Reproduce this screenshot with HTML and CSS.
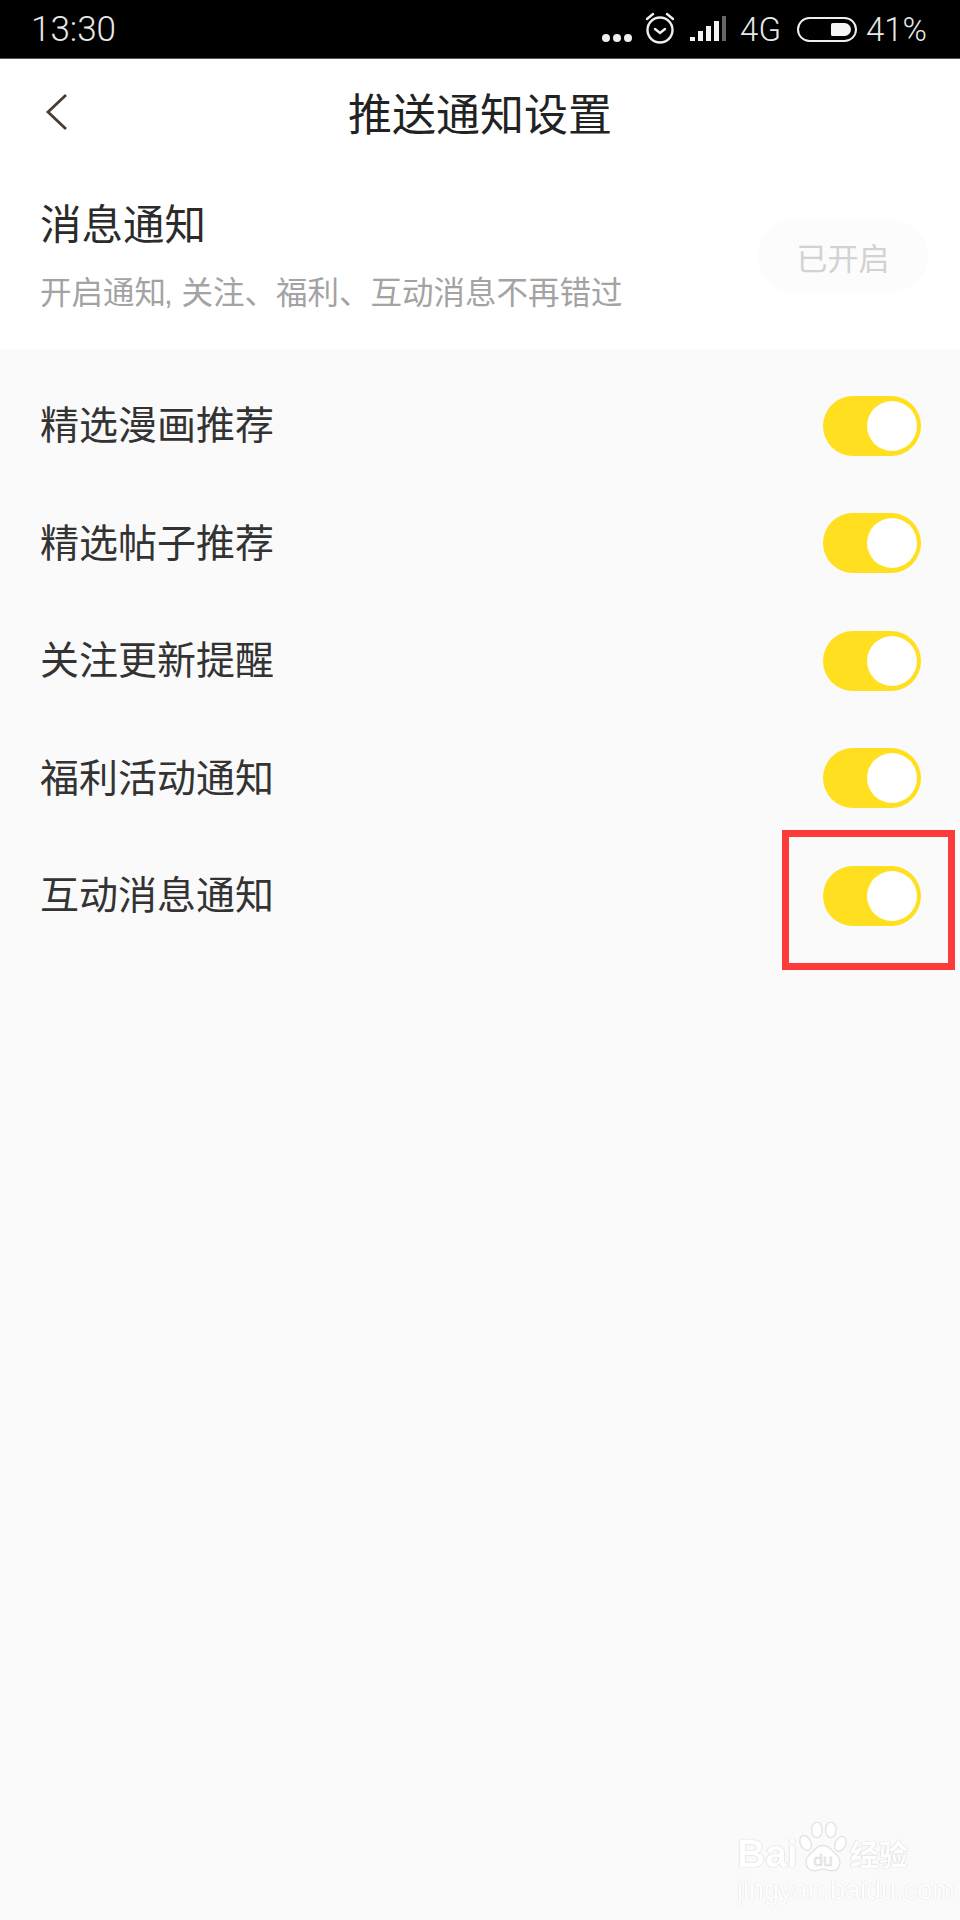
FILE: index.html
```html
<!DOCTYPE html>
<html lang="zh-CN">
<head>
    <meta charset="UTF-8">
    <meta name="viewport" content="width=device-width, initial-scale=1.0">
    <title>推送通知设置</title>
    <link rel="stylesheet" href="styles.css">
</head>
<body>
    <div class="page">
        <div class="status-bar">
            <span class="status-time">13:30</span>
            <div class="status-icons">
                <div class="status-dots"><i></i><i></i><i></i></div>
                <svg class="icon-alarm" width="30" height="34" viewBox="0 0 30 34" fill="none" stroke="#eee" stroke-width="2.4" stroke-linecap="round">
                    <circle cx="15" cy="19" r="12.5"/>
                    <path d="M10 18l5 4 5-4"/>
                    <path d="M2 8l6-5M28 8l-6-5"/>
                </svg>
                <svg class="icon-signal" width="36" height="26" viewBox="0 0 36 26" fill="#f2f2f2">
                    <rect x="0" y="21" width="5" height="4"/>
                    <rect x="8" y="15" width="5" height="10"/>
                    <rect x="16" y="10" width="5" height="15"/>
                    <rect x="24" y="5" width="5" height="20"/>
                    <rect x="32" y="0" width="4" height="25" fill="#666"/>
                </svg>
                <span class="status-net">4G</span>
                <div class="battery"><div class="battery-fill"></div></div>
                <span class="status-pct">41%</span>
            </div>
        </div>

        <div class="nav-bar">
            <svg class="back-icon" width="24" height="38" viewBox="0 0 24 38" fill="none" stroke="#4a3a34" stroke-width="2.8">
                <path d="M21 2L3 19l18 17"/>
            </svg>
            <h1>推送通知设置</h1>
        </div>

        <div class="notice">
            <div class="notice-text">
                <h2>消息通知</h2>
                <p>开启通知<span class="comma">,</span> 关注、福利、互动消息不再错过</p>
            </div>
            <div class="notice-button">已开启</div>
        </div>

        <div class="settings">
            <div class="setting-row"><span>精选漫画推荐</span><div class="toggle"><i></i></div></div>
            <div class="setting-row"><span>精选帖子推荐</span><div class="toggle"><i></i></div></div>
            <div class="setting-row"><span>关注更新提醒</span><div class="toggle"><i></i></div></div>
            <div class="setting-row"><span>福利活动通知</span><div class="toggle"><i></i></div></div>
            <div class="setting-row"><span>互动消息通知</span><div class="toggle"><i></i></div></div>
        </div>

        <div class="highlight"></div>

        <div class="watermark">
            <div class="wm-top">
                <span class="wm-logo">Bai</span>
                <svg class="wm-paw" width="50" height="54" viewBox="0 0 54 62" fill="#fff" stroke="#e2e2e2" stroke-width="1.5">
                    <ellipse cx="7" cy="24" rx="6" ry="9" transform="rotate(-25 7 24)"/>
                    <ellipse cx="20" cy="9" rx="6" ry="9"/>
                    <ellipse cx="36" cy="9" rx="6" ry="9"/>
                    <ellipse cx="47" cy="25" rx="6" ry="9" transform="rotate(25 47 25)"/>
                    <path d="M27 27c8 0 10 6 16 11 6 6 4 18-6 18-4 0-6-2-10-2s-6 2-10 2c-10 0-12-12-6-18 6-5 8-11 16-11z"/>
                    <text x="27" y="50" text-anchor="middle" class="wm-du">du</text>
                </svg>
                <span class="wm-cn">经验</span>
            </div>
            <div class="wm-url">jingyan.baidu.com</div>
        </div>
    </div>
</body>
</html>
```

FILE: styles.css
```css
* {
    box-sizing: border-box;
}

body {
    margin: 0;
    font-family: "Liberation Sans", "Noto Sans CJK SC", sans-serif;
}

.page {
    position: relative;
    width: 960px;
    height: 1920px;
    overflow: hidden;
    display: flex;
    flex-direction: column;
    background-color: #fafafa;
}

/* status bar */
.status-bar {
    height: 59px;
    flex: none;
    display: flex;
    justify-content: space-between;
    align-items: center;
    padding: 0 33px 0 31px;
    background-color: #000;
    border-bottom: 1px solid #555;
    color: #e8e8e8;
    font-family: Roboto, sans-serif;
    font-weight: 300;
}

.status-time {
    font-size: 35px;
}

.status-icons {
    display: flex;
    align-items: center;
    font-size: 33px;
}

.status-dots {
    display: flex;
    gap: 3px;
    margin: 18px 13px 0 0;
}

.status-dots i {
    width: 8px;
    height: 8px;
    border-radius: 50%;
    background-color: #eee;
}

.icon-alarm {
    margin: -3px 15px 0 0;
}

.icon-signal {
    margin: 0 14px 0 0;
}

.status-net {
    margin-right: 16px;
}

.battery {
    width: 60px;
    height: 25px;
    margin-right: 9px;
    padding: 4px;
    display: flex;
    justify-content: flex-end;
    border: 2px solid #eee;
    border-radius: 13px;
}

.battery-fill {
    width: 20px;
    background-color: #f5f5f5;
    border-radius: 2px 7px 7px 2px;
}

/* top bar */
.nav-bar {
    height: 108px;
    flex: none;
    position: relative;
    display: flex;
    justify-content: center;
    align-items: center;
    background-color: #fff;
}

.nav-bar h1 {
    margin: -2px 0 0;
    font-size: 44px;
    font-weight: 400;
    color: #222;
}

.back-icon {
    position: absolute;
    left: 45px;
    top: 34px;
}

/* notice block */
.notice {
    height: 182px;
    flex: none;
    display: flex;
    justify-content: space-between;
    align-items: center;
    padding: 0 32px 0 40px;
    background-color: #fff;
}

.notice-text h2 {
    margin: -4px 0 21px;
    font-size: 41.5px;
    line-height: 52px;
    font-weight: 400;
    color: #2b2b2b;
}

.notice-text p {
    margin: 0;
    font-size: 31.5px;
    line-height: 40px;
    color: #a3a3a3;
}

.comma {
    margin-left: -2px;
}

.notice-button {
    width: 170px;
    height: 72px;
    display: flex;
    justify-content: center;
    align-items: center;
    margin-top: -4px;
    border-radius: 36px;
    background-color: #fcfcfc;
    font-size: 31px;
    color: #d2d2d2;
}

/* settings list */
.settings {
    padding: 18px 39px 0 40px;
}

.setting-row {
    height: 117.5px;
    display: flex;
    justify-content: space-between;
    align-items: center;
    font-size: 39px;
    color: #333;
}

.setting-row span {
    margin-bottom: 7px;
}

.toggle {
    width: 98px;
    height: 60px;
    padding: 5px 4px;
    display: flex;
    justify-content: flex-end;
    border-radius: 30px;
    background-color: #ffdf1f;
}

.toggle i {
    width: 50px;
    height: 50px;
    border-radius: 50%;
    background-color: #fff;
}

.highlight {
    position: absolute;
    left: 782px;
    top: 830px;
    width: 173px;
    height: 140px;
    border: 7px solid #fd3a3a;
}

/* watermark */
.watermark {
    position: absolute;
    left: 737px;
    top: 1820px;
}

.wm-top {
    display: flex;
    align-items: flex-end;
    height: 54px;
}

.wm-logo {
    font-size: 39px;
    line-height: 40px;
    font-weight: 700;
    color: #fff;
    text-shadow: 0 0 1px #ccc, 0 0 1px #ccc;
}

.wm-paw {
    margin: 0 0 -2px 0;
    flex: none;
}

.wm-du {
    font-size: 20px;
    font-family: "Liberation Sans", sans-serif;
    fill: #f0f0f0;
    stroke: #d8d8d8;
    stroke-width: 0.6;
}

.wm-cn {
    margin-left: 2px;
    font-size: 29px;
    line-height: 36px;
    font-weight: 700;
    color: #fff;
    text-shadow: 0 0 1px #ccc, 0 0 1px #ccc;
}

.wm-url {
    margin-top: 2px;
    font-size: 27px;
    line-height: 28px;
    white-space: nowrap;
    color: #fff;
    text-shadow: 0 0 1px #ccc;
}
```
